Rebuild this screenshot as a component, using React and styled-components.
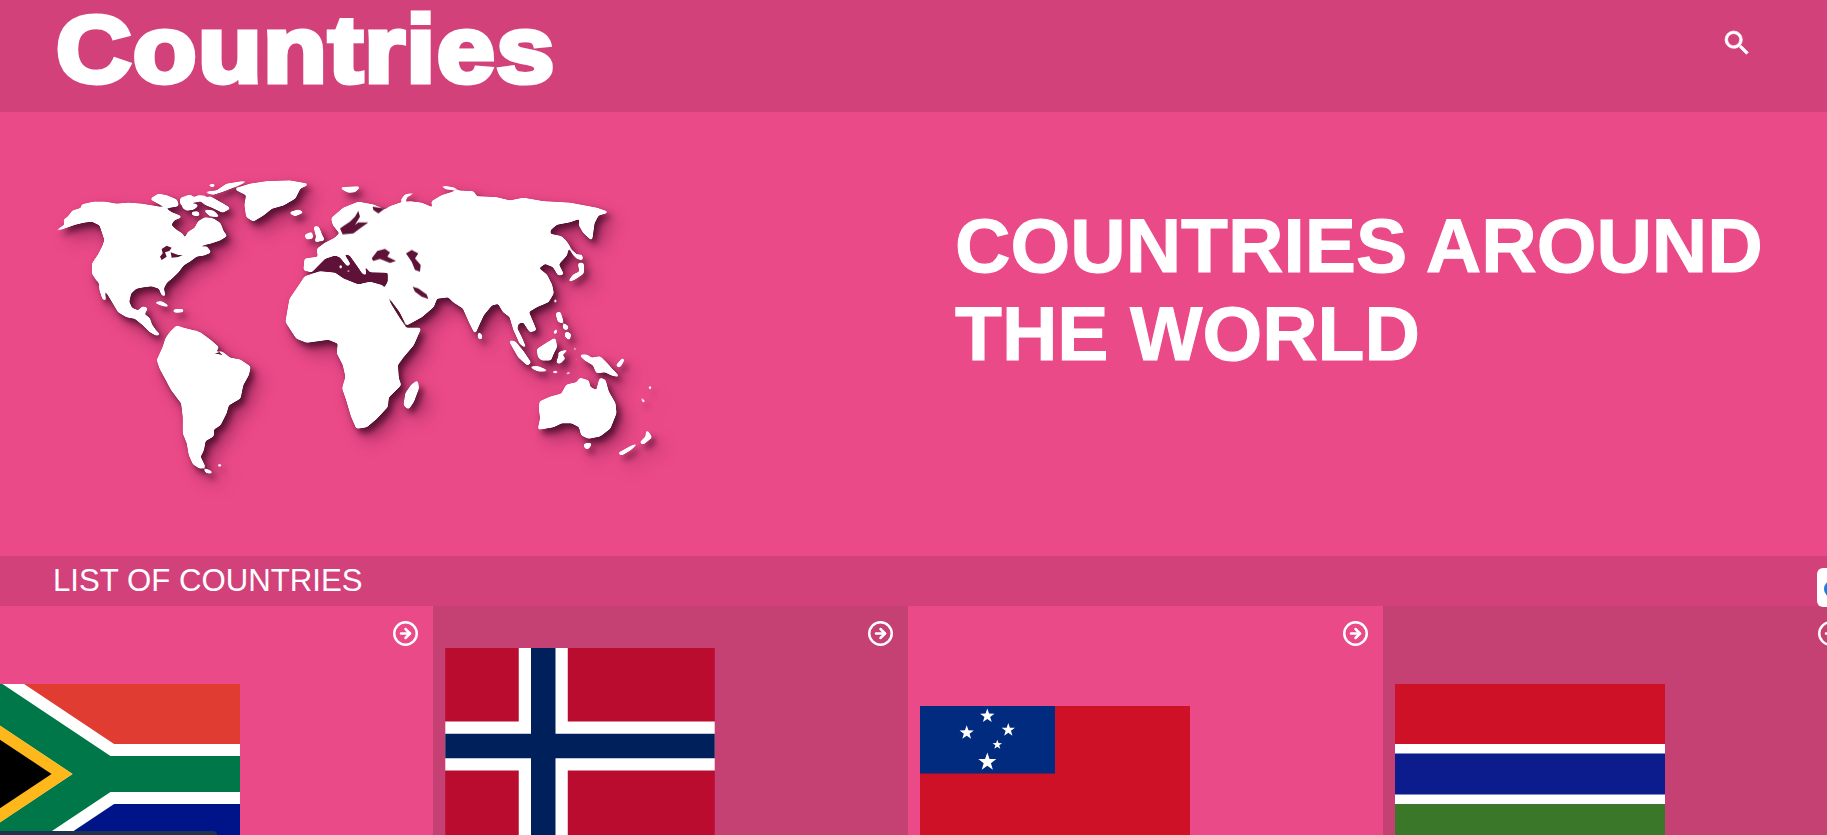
import React from "react";
import styled, { createGlobalStyle } from "styled-components";
import { MdSearch } from "react-icons/md";
import { CircleArrowRight } from "lucide-react";

const Global = createGlobalStyle`
  html, body { margin: 0; padding: 0; height: 100%; overflow: hidden; }
  body { font-family: "Liberation Sans", Arial, sans-serif; background: #eb4a88; color: #fff; }
`;

const Page = styled.div`
  position: relative;
  height: 835px;
  overflow: hidden;
`;

const Header = styled.header`
  height: 112px;
  background: #d2417a;
  display: flex;
  justify-content: space-between;
  align-items: flex-start;
  padding: 0 74px 0 56px;
  box-sizing: border-box;
`;

const Logo = styled.h1`
  margin: 0;
  font-size: 95px;
  line-height: 98px;
  font-weight: 700;
  letter-spacing: 1.2px;
  -webkit-text-stroke: 5px #fff;
  transform: scaleX(1.1);
  transform-origin: left center;
`;

const SearchButton = styled.button`
  background: none;
  border: 0;
  padding: 0;
  margin-top: 27px;
  color: #fff;
  display: flex;
  & svg path:not([fill="none"]) { stroke: currentColor; stroke-width: 0.5px; }
`;

const Hero = styled.section`
  height: 444px;
  background: #eb4a88;
  display: flex;
  padding: 58px 0 0 50px;
  box-sizing: border-box;
`;

const MapSvg = styled.svg`
  width: 620px;
  height: 320px;
  flex: none;
  filter: drop-shadow(4px 5px 3px rgba(55, 5, 32, 0.72)) drop-shadow(7px 8px 8px rgba(80, 10, 48, 0.42));
`;

const HeroTitle = styled.h2`
  margin: 31px 0 0 285px;
  font-size: 76.8px;
  line-height: 88px;
  font-weight: 700;
  white-space: nowrap;
  -webkit-text-stroke: 1px #fff;
`;

const ListBar = styled.div`
  height: 50px;
  background: #d2417a;
  padding-left: 53px;
  font-size: 31.2px;
  line-height: 50px;
`;

const Cards = styled.div`
  display: grid;
  grid-template-columns: repeat(4, 475px);
  margin-left: -42px;
  height: 229px;
  overflow: hidden;
`;

const Card = styled.article`
  position: relative;
  padding-left: 12px;
  background: ${(p) => (p.$dark ? "#c54174" : "#eb4a88")};
`;

const CardIcon = styled.span`
  position: absolute;
  top: 14px;
  right: 14px;
  color: #fff;
  display: flex;
`;

const FlagSvg = styled.svg`
  display: block;
  width: 270px;
  margin-top: ${(p) => p.$top}px;
  height: ${(p) => p.$h}px;
`;

const SideTab = styled.div`
  position: absolute;
  right: 0;
  top: 568px;
  width: 10px;
  height: 39px;
  background: #fff;
  border-radius: 6px 0 0 6px;
  overflow: hidden;
`;

const SideDot = styled.span`
  position: absolute;
  left: 7px;
  top: 12px;
  width: 18px;
  height: 18px;
  border-radius: 50%;
  background: #1a7be8;
`;

const BottomTab = styled.div`
  position: absolute;
  left: 0;
  bottom: 0;
  width: 217px;
  height: 4px;
  background: #20304f;
  border-radius: 0 5px 0 0;
`;

const SouthAfrica = () => (
  <FlagSvg $top={78} $h={180} viewBox="0 0 900 600">
    <rect width="900" height="300" fill="#e03c31" />
    <rect y="300" width="900" height="300" fill="#001489" />
    <path d="M0 0L450 300L0 600M450 300H900" fill="none" stroke="#fff" strokeWidth="200" />
    <path d="M0 0L450 300L0 600M450 300H900" fill="none" stroke="#007749" strokeWidth="120" />
    <polygon points="0,72 342,300 0,528" fill="#ffb81c" />
    <polygon points="0,119 272,300 0,481" fill="#000" />
  </FlagSvg>
);

const Norway = () => (
  <FlagSvg $top={42} $h={196} viewBox="0 0 22 16">
    <rect width="22" height="16" fill="#ba0c2f" />
    <rect x="6" width="4" height="16" fill="#fff" />
    <rect y="6" width="22" height="4" fill="#fff" />
    <rect x="7" width="2" height="16" fill="#00205b" />
    <rect y="7" width="22" height="2" fill="#00205b" />
  </FlagSvg>
);

const starPoints = (cx, cy, r) =>
  Array.from({ length: 10 }, (_, i) => {
    const rad = i % 2 ? r * 0.4 : r;
    const a = -Math.PI / 2 + (i * Math.PI) / 5;
    return `${cx + rad * Math.cos(a)},${cy + rad * Math.sin(a)}`;
  }).join(" ");

const samoaStars = [
  [67.3, 10, 7.5],
  [46.7, 26.7, 7.5],
  [88.3, 24, 7],
  [77.3, 38.7, 5],
  [67.3, 56, 9.5],
];

const Samoa = () => (
  <FlagSvg $top={100} $h={135} viewBox="0 0 270 135">
    <rect width="270" height="135" fill="#ce1126" />
    <rect width="135" height="67.5" fill="#002b7f" />
    {samoaStars.map(([x, y, r]) => (
      <polygon key={x + "-" + y} points={starPoints(x, y, r)} fill="#fff" />
    ))}
  </FlagSvg>
);

const Gambia = () => (
  <FlagSvg $top={78} $h={180} viewBox="0 0 270 180">
    <rect width="270" height="60" fill="#ce1126" />
    <rect y="60" width="270" height="60" fill="#fff" />
    <rect y="69.5" width="270" height="41" fill="#0c1c8c" />
    <rect y="120" width="270" height="60" fill="#3a7728" />
  </FlagSvg>
);

const LAND = "#fff";
const SEA = "#5e1238";

const WorldMap = () => (
  <MapSvg viewBox="50 170 620 320" aria-hidden="true">
    <defs>
      <filter id="soften" filterUnits="userSpaceOnUse" x="50" y="170" width="620" height="320">
        <feGaussianBlur stdDeviation="0.8" />
        <feColorMatrix type="matrix" values="1 0 0 0 0  0 1 0 0 0  0 0 1 0 0  0 0 0 5 -1.1" />
      </filter>
    </defs>
    {/* Mediterranean and Red Sea, in shade behind the land */}
    <g transform="translate(290 175) scale(.33333)" fill={SEA}>
      <path d="M60 294L100 250L150 240L205 270L225 265L297 288L288 326L240 324L205 332L160 314L130 297L90 292Z" />
      <path d="M280 338L300 368L330 412L352 458L344 464L315 422L288 376Z" />
    </g>
    <g filter="url(#soften)">
      {/* Americas north */}
      <g transform="translate(50 175) scale(.33333)" fill={LAND}>
        <path d="M12 170L45 150L42 135L55 125L68 108L95 100L95 90L130 82L165 82L200 88L235 85L275 88L320 95L345 100L365 113L395 125L372 135L362 150L378 165L398 178L404 192L415 172L435 160L445 140L465 128L490 132L510 145L520 170L530 182L510 195L480 205L455 210L450 218L470 215L482 232L462 240L440 243L420 258L400 270L385 290L365 310L350 322L340 340L345 365L335 358L328 340L305 332L280 335L258 340L242 355L236 380L245 400L265 408L278 395L292 400L282 418L298 430L305 450L318 468L330 480L318 480L300 470L280 450L255 430L230 425L205 410L190 385L175 360L155 330L140 315L127 295L128 265L145 240L158 215L165 195L155 165L150 150L125 138L100 142L75 148L45 158Z" />
        <path d="M148 325L155 325L163 350L167 378L158 370L150 345Z" />
        <path d="M302 72L325 58L350 62L380 75L385 92L350 98L325 85Z" />
        <path d="M392 70L420 60L432 68L445 62L470 64L450 78L425 82L405 92L392 88Z" />
        <path d="M450 75L480 65L515 85L540 100L518 112L490 98L465 88Z" />
        <path d="M395 95L420 86L445 90L432 102L410 106Z" />
        <path d="M425 112L445 110L448 122L428 120Z" />
        <path d="M462 105L490 108L508 125L480 122Z" />
        <path d="M462 52L500 48L530 28L595 17L560 32L520 48L490 58Z" />
        <path d="M472 30L495 28L490 36Z" />
        <path d="M555 42L600 28L650 20L720 18L775 28L750 40L735 70L700 90L665 100L640 120L610 138L590 125L585 90L590 60Z" />
        <path d="M718 113L745 105L760 112L735 122Z" />
        <path d="M312 382L335 380L360 395L340 392Z" />
        <path d="M368 405L398 403L400 410L375 412Z" />
        <circle cx="380" cy="385" r="2.5" /><circle cx="420" cy="410" r="2.5" /><circle cx="445" cy="420" r="2.5" />
        <circle cx="450" cy="440" r="2.5" /><circle cx="440" cy="462" r="2.5" /><circle cx="442" cy="313" r="2.5" />
        <circle cx="662" cy="420" r="2.5" /><circle cx="675" cy="430" r="2.5" />
      </g>
      {/* South America, Madagascar */}
      <g transform="translate(150 310) scale(.33333)" fill={LAND}>
        <path d="M80 48L100 55L130 62L150 68L180 90L205 112L195 128L215 125L240 145L270 150L300 170L295 195L278 225L270 265L235 285L228 310L210 345L190 358L190 378L165 392L160 420L150 440L165 472L150 475L130 462L118 435L112 400L100 370L100 320L95 280L65 240L30 175L22 150L40 110L48 85L62 65Z" />
        <path d="M160 476L175 480L190 490L170 488Z" />
        <path d="M198 465L215 463L212 470Z" />
        <path d="M802 212L805 235L790 275L775 297L762 285L768 250L785 225Z" />
        <circle cx="842" cy="162" r="2.5" /><circle cx="838" cy="266" r="2.5" /><circle cx="474" cy="234" r="2.5" /><circle cx="765" cy="212" r="2.5" />
      </g>
      {/* Eurasia, Africa */}
      <g transform="translate(290 175) scale(.33333)" fill={LAND}>
        <path d="M-12 440L-5 400L0 372L25 335L45 305L90 290L135 295L160 312L205 330L240 322L278 332L300 385L325 425L348 460L392 460L370 510L340 545L322 570L325 610L332 630L295 667L292 695L260 730L230 755L200 760L185 725L170 675L158 640L168 605L160 570L142 535L145 505L115 493L50 502L20 490L0 460Z" />
        <path d="M42 285L45 252L85 247L82 222L105 205L135 190L150 175L130 150L125 130L160 100L205 82L250 90L285 105L300 95L330 85L360 80L395 85L420 95L430 100L425 80L455 62L500 48L550 50L560 65L620 68L660 78L700 70L760 80L840 85L880 92L920 100L955 112L925 120L912 145L905 195L880 172L868 150L870 130L840 140L800 148L780 165L780 178L815 185L835 215L830 240L805 268L820 298L805 300L790 275L765 265L745 280L770 300L785 330L790 355L775 380L740 395L715 410L738 465L720 470L700 440L685 445L680 460L695 490L708 520L690 505L672 465L660 425L640 410L625 385L605 390L580 420L555 475L540 445L520 400L490 380L475 365L440 370L430 395L395 425L350 450L330 410L300 370L284 340L295 320L295 292L240 290L222 268L228 300L218 295L205 275L180 240L160 235L180 268L172 272L150 245L135 240L105 250L90 265L65 290Z" />
        <path d="M72 155L85 155L95 180L103 195L75 200L80 185Z" />
        <path d="M45 180L65 172L68 190L50 192Z" />
        <path d="M150 38L210 35L195 50L175 52Z" />
        <path d="M332 78L345 60L380 52L350 65L345 80Z" />
        <path d="M450 32L490 38L510 45L470 42Z" />
        <path d="M835 320L850 300L870 290L865 265L880 265L880 295L855 312Z" />
        <path d="M855 240L875 240L878 255L860 250Z" />
        <path d="M820 185L845 225L860 240L855 245L830 210Z" />
        <path d="M565 472L575 480L575 492L565 490Z" />
        <path d="M795 368L800 380L793 385Z" />
        <path d="M148 270L156 272L152 285Z" />
        <path d="M168 288L182 285L176 292Z" />
      </g>
      {/* Oceania */}
      <g transform="translate(440 310) scale(.33333)" fill={LAND}>
        <path d="M208 92L225 95L250 125L272 158L262 165L235 140Z" />
        <path d="M292 118L320 100L345 85L350 110L340 130L332 150L305 150L295 140Z" />
        <path d="M355 128L385 118L365 135L375 145L360 160L350 158L358 135Z" />
        <path d="M268 170L295 170L325 183L295 183Z" />
        <path d="M335 185L350 183L355 188L338 188Z" />
        <path d="M375 192L395 183L385 193Z" />
        <path d="M420 135L440 135L455 145L480 140L500 160L518 180L538 200L515 195L495 185L470 188L460 165L435 150Z" />
        <path d="M348 10L360 6L370 38L355 35Z" />
        <path d="M370 40L385 50L380 60L370 55Z" />
        <path d="M378 65L392 72L388 90L375 78Z" />
        <path d="M340 68L352 55L348 72Z" />
        <path d="M402 112L407 112L405 130Z" />
        <path d="M404 146L416 148L406 151Z" />
        <path d="M300 275L330 262L365 252L380 225L410 218L420 205L445 212L450 232L470 242L480 205L495 210L505 245L525 280L528 310L510 355L480 378L445 385L425 375L418 350L395 338L365 338L340 350L295 358L302 325L298 295Z" />
        <path d="M432 402L455 400L445 416L435 414Z" />
        <path d="M535 430L575 408L595 400L570 420L545 435Z" />
        <path d="M600 398L618 380L620 360L635 382L610 402Z" />
        <path d="M528 168L548 145L552 150L540 170Z" />
        <path d="M600 258L615 275L610 278Z" />
        <path d="M626 228L634 230L630 242Z" />
        <circle cx="560" cy="170" r="2.5" /><circle cx="575" cy="178" r="2.5" /><circle cx="590" cy="190" r="2.5" />
        <circle cx="495" cy="25" r="2.5" /><circle cx="438" cy="78" r="2.5" /><circle cx="636" cy="130" r="2.5" />
        <circle cx="665" cy="78" r="2.5" /><circle cx="70" cy="95" r="2.5" /><circle cx="605" cy="320" r="2.5" />
      </g>
    </g>
    {/* Inland seas, drawn over the land */}
    <g transform="translate(50 175) scale(.33333)" fill={SEA}>
      <path d="M335 222L350 212L365 218L358 228L345 232L350 245L335 255L330 245L338 235Z" />
      <path d="M362 232L385 240L398 240L385 246L365 248Z" />
    </g>
    <g transform="translate(150 310) scale(.33333)" fill={SEA}>
      <path d="M194 132L208 126L218 136L205 132Z" />
    </g>
    <g transform="translate(290 175) scale(.33333)" fill={SEA}>
      <path d="M205 108L195 125L180 140L165 150L150 160L158 178L190 175L210 160L235 142L205 142L195 150L210 125Z" />
      <path d="M248 95L285 100L265 115L250 105Z" />
      <path d="M245 250L262 228L285 222L300 232L292 245L318 258L300 264L270 252L250 258Z" />
      <path d="M348 235L365 225L385 235L375 250L392 270L390 290L375 285L365 260Z" />
      <path d="M368 335L385 340L410 358L415 372L395 365L375 350Z" />
    </g>
  </MapSvg>
);

const countries = [
  { id: "za", Flag: SouthAfrica },
  { id: "no", Flag: Norway, dark: true },
  { id: "ws", Flag: Samoa },
  { id: "gm", Flag: Gambia, dark: true },
];

export default function App() {
  return (
    <Page>
      <Global />
      <Header>
        <Logo>Countries</Logo>
        <SearchButton aria-label="Search">
          <MdSearch size={32} />
        </SearchButton>
      </Header>
      <Hero>
        <WorldMap />
        <HeroTitle>
          COUNTRIES AROUND
          <br />
          THE WORLD
        </HeroTitle>
      </Hero>
      <ListBar>LIST OF COUNTRIES</ListBar>
      <Cards>
        {countries.map(({ id, Flag, dark }) => (
          <Card key={id} $dark={dark}>
            <CardIcon>
              <CircleArrowRight size={27} strokeWidth={2.2} />
            </CardIcon>
            <Flag />
          </Card>
        ))}
      </Cards>
      <SideTab>
        <SideDot />
      </SideTab>
      <BottomTab />
    </Page>
  );
}
